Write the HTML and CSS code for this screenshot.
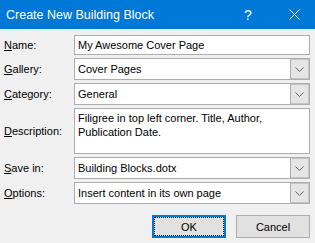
FILE: index.html
```html
<!DOCTYPE html>
<html lang="en">
<head>
    <meta charset="UTF-8">
    <meta name="viewport" content="width=device-width, initial-scale=1.0">
    <title>Create New Building Block</title>
    <link rel="stylesheet" href="styles.css">
</head>
<body>
    <div class="dialog">
        <div class="titlebar">
            <span class="title">Create New Building Block</span>
            <span class="help">?</span>
            <span class="close">
                <svg width="11" height="11" viewBox="0 0 11 11"><path d="M0.5 0.5L10.5 10.5M10.5 0.5L0.5 10.5" stroke="#fff" stroke-width="1" fill="none"/></svg>
            </span>
        </div>

        <div class="form">
            <label class="label"><u>N</u>ame:</label>
            <div class="field name">My Awesome Cover Page</div>

            <label class="label"><u>G</u>allery:</label>
            <div class="field select">
                <span class="value">Cover Pages</span>
                <span class="drop"><svg width="9" height="5" viewBox="0 0 9 5"><path d="M0.5 0.5L4.5 4.5L8.5 0.5" stroke="#606060" fill="none"/></svg></span>
            </div>

            <label class="label"><u>C</u>ategory:</label>
            <div class="field select">
                <span class="value">General</span>
                <span class="drop"><svg width="9" height="5" viewBox="0 0 9 5"><path d="M0.5 0.5L4.5 4.5L8.5 0.5" stroke="#606060" fill="none"/></svg></span>
            </div>

            <label class="label"><u>D</u>escription:</label>
            <div class="field area">Filigree in top left corner. Title, Author, Publication Date.</div>

            <label class="label"><u>S</u>ave in:</label>
            <div class="field select">
                <span class="value">Building Blocks.dotx</span>
                <span class="drop"><svg width="9" height="5" viewBox="0 0 9 5"><path d="M0.5 0.5L4.5 4.5L8.5 0.5" stroke="#606060" fill="none"/></svg></span>
            </div>

            <label class="label"><u>O</u>ptions:</label>
            <div class="field select">
                <span class="value">Insert content in its own page</span>
                <span class="drop"><svg width="9" height="5" viewBox="0 0 9 5"><path d="M0.5 0.5L4.5 4.5L8.5 0.5" stroke="#606060" fill="none"/></svg></span>
            </div>
        </div>

        <div class="buttons">
            <button class="btn default">OK</button>
            <button class="btn">Cancel</button>
        </div>
    </div>
</body>
</html>
```

FILE: styles.css
```css
body {
    margin: 0;
    font-family: "Liberation Sans", Arial, sans-serif;
    font-size: 11px;
    color: #000;
    background: #f0f0f0;
}

.dialog {
    width: 315px;
    height: 243px;
    background: #f0f0f0;
    overflow: hidden;
}

.titlebar {
    height: 29px;
    background: #0078d7;
    color: #fff;
    display: flex;
    align-items: center;
    padding-left: 6px;
}

.title {
    flex: 1;
    font-size: 12.5px;
}

.help {
    width: 50px;
    text-align: center;
    font-size: 14px;
}

.close {
    width: 42px;
    display: flex;
    justify-content: center;
}

.close svg {
    display: block;
}

.form {
    display: grid;
    grid-template-columns: 70px 236px;
    row-gap: 3px;
    align-items: center;
    padding: 6px 0 0 4px;
}

.field {
    box-sizing: border-box;
    height: 22px;
    border: 1px solid #adadad;
    background: #fff;
    padding: 0 0 0 3px;
    display: flex;
    align-items: center;
}

.field.name {
    height: 20px;
}

.field.area {
    height: 46px;
    display: block;
    padding: 2px 20px 0 3px;
    line-height: 14px;
}

.select .value {
    flex: 1;
}

.select .drop {
    align-self: stretch;
    width: 17px;
    background: #e5e5e5;
    border: 1px solid #c4c4c4;
    border-left-color: #adadad;
    display: flex;
    align-items: center;
    justify-content: center;
}

.drop svg {
    display: block;
}

.buttons {
    display: flex;
    justify-content: flex-end;
    gap: 10px;
    padding: 11px 5px 0 0;
}

.btn {
    box-sizing: border-box;
    width: 74px;
    height: 23px;
    border: 1px solid #adadad;
    background: #e1e1e1;
    font-family: inherit;
    font-size: 11px;
    color: #000;
    padding: 0;
}

.btn.default {
    border: 2px solid #0078d7;
    outline: 1px dotted #000;
    outline-offset: -3px;
}
```
